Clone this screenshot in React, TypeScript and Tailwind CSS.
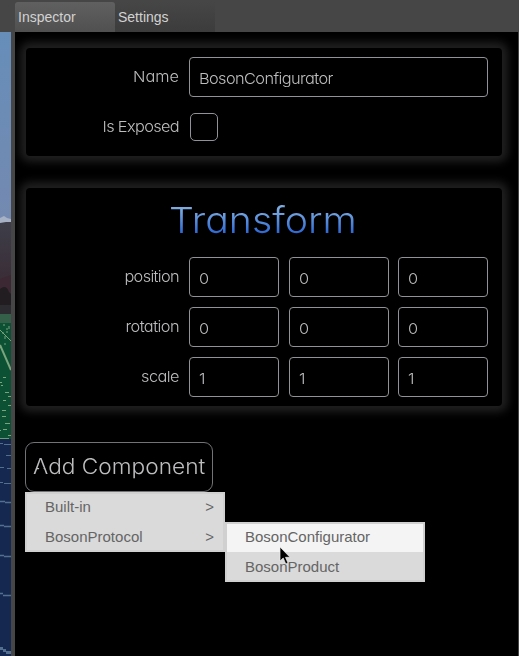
import type { ReactNode } from "react";

const thin =
  "font-[Inter,'Liberation_Sans',sans-serif] font-light text-[#bdbdbf] [font-feature-settings:'cv11','calt'_0]";

function SceneView() {
  return (
    <svg width="11" height="624" viewBox="0 0 11 624" className="block shrink-0" aria-hidden="true">
      <defs>
        <linearGradient id="sky" x1="0" y1="0" x2="0" y2="1">
          <stop offset="0" stopColor="#668eb9" />
          <stop offset="1" stopColor="#7489b0" />
        </linearGradient>
        <linearGradient id="hill" x1="0" y1="0" x2="0" y2="1">
          <stop offset="0" stopColor="#3d3e49" />
          <stop offset="1" stopColor="#3a2d36" />
        </linearGradient>
      </defs>
      <rect width="11" height="192" fill="url(#sky)" />
      <path d="M0 186 L4 184 L7 186 L11 187 V193 H0Z" fill="#a6b1c5" />
      <path d="M0 191 L6 190 L11 190 V250 H0Z" fill="url(#hill)" />
      <path d="M0 247 L11 243 V284 H0Z" fill="#3b2832" />
      <path d="M0 257 Q6 252 9 260 L11 262 V282 H0Z" fill="#211d20" />
      <rect y="273" width="11" height="10" fill="#2b2b30" />
      <rect y="282" width="11" height="9" fill="#345f49" />
      <rect y="291" width="11" height="116" fill="#0d5134" />
      <g stroke="#79a47e" fill="none">
        <path d="M0 298 L11 309" />
        <path d="M0 313 L11 338" strokeWidth="2" />
        <path d="M4 292v2M7 296v2M2 301h2M5 304v3M9 294v3M6 300h2M4 312h2" />
        <path d="M3 345.500h3M0 350.500h2M1 353.500h2M5 360.500h4M8 364.500h3M3 368.500h3M8 373.500h3M2 378.500h4M2 384.500h4M5 391.500h5M3 397.500h4M8 403.500h3M0 398.500h1" />
      </g>
      <rect y="407" width="11" height="217" fill="#152850" />
      <path d="M0 406.500h9" stroke="#6a9c72" />
      <g stroke="#536f8f" fill="none">
        <path d="M0 411.500h3M4 412.500h7M6 423.500h5M0 435.500h4M7 436.500h4M0 450.500h3M4 451.500h7" />
        <path d="M0 469.500h5M5 470.500h6M0 493.500h4M4 494.500h7M0 523.500h4M4 524.500h7M0 561.500h3M3 563.500h8" strokeWidth="1.500" />
        <path d="M0 616.500h3M3 618.500h3M6 620.500h5" strokeWidth="3" />
      </g>
    </svg>
  );
}

function Panel({ children, className }: { children: ReactNode; className: string }) {
  return (
    <section className={`ml-[11px] w-[476px] shrink-0 rounded-[4px] bg-black shadow-[0_0_8px_6px_#202020] ${className}`}>
      {children}
    </section>
  );
}

function Label({ children, className }: { children: ReactNode; className: string }) {
  return (
    <div className={`w-[153px] shrink-0 origin-right scale-x-[1.09] text-right text-[15px] leading-[40px] ${thin} ${className}`}>
      {children}
    </div>
  );
}

function Field({ value, className }: { value: string; className: string }) {
  return (
    <div className={`h-10 shrink-0 rounded-[4px] border border-[#919197] pl-[9px] text-[15px] leading-[41px] tracking-[-0.55px] ${thin} ${className}`}>
      <span className="inline-block origin-left scale-x-[1.09]">{value}</span>
    </div>
  );
}

function VectorRow({ label, spacing, value }: { label: string; spacing: string; value: string }) {
  return (
    <div className="flex h-10">
      <Label className={spacing}>{label}</Label>
      <div className="ml-[10px] flex">
        <Field value={value} className="w-[90px]" />
        <Field value={value} className="ml-[10px] w-[100px]" />
        <Field value={value} className="ml-[9px] w-[90px]" />
      </div>
    </div>
  );
}

function MenuItem({ children, arrow, className }: { children: ReactNode; arrow?: boolean; className: string }) {
  return (
    <div className={`flex justify-between pl-[18px] pr-[9px] text-[15px] text-[#656565] ${className}`}>
      <span>{children}</span>
      {arrow && <span>&gt;</span>}
    </div>
  );
}

export default function App() {
  return (
    <div className="flex h-[656px] w-[519px] flex-col overflow-hidden bg-[#464646] font-['Liberation_Sans',Arial,sans-serif]">
      <header className="flex h-8 shrink-0 pl-[15px] pt-[2px] text-[14px] leading-[31px] text-[#d2d2d2]">
        <div className="w-[100px] rounded-t-[3px] bg-gradient-to-b from-[#606060] to-[#505050] pl-[3px]">Inspector</div>
        <div className="w-[100px] bg-gradient-to-b from-[#464646] to-[#3c3c3c] pl-[3px]">Settings</div>
      </header>
      <div className="flex h-[624px]">
        <SceneView />
        <main className="ml-1 flex w-[503px] flex-col overflow-hidden bg-black">
          <Panel className="mt-4 h-[108px] pt-[9px]">
            <div className="flex h-10">
              <Label className="tracking-[0px]">Name</Label>
              <Field value="BosonConfigurator" className="ml-[10px] w-[299px]" />
            </div>
            <div className="mt-[10px] flex">
              <Label className="tracking-[-0.6px]">Is Exposed</Label>
              <div className="ml-[11px] mt-[6px] size-7 rounded-[5px] border border-[#919197]" />
            </div>
          </Panel>
          <Panel className="mt-8 h-[218px] pt-[10px]">
            <h1 className="h-[49px] pl-[143px] font-[Inter,sans-serif] text-[36px] font-light leading-[45px] [font-feature-settings:'cv11']">
              <span className="inline-block origin-left scale-x-[1.09] bg-gradient-to-b from-[#7dabe0] from-25% to-[#2b65d4] to-80% bg-clip-text text-transparent">
                Transform
              </span>
            </h1>
            <div className="mt-[10px] flex flex-col gap-[10px]">
              <VectorRow label="position" spacing="tracking-[-0.6px]" value="0" />
              <VectorRow label="rotation" spacing="tracking-[-0.5px]" value="0" />
              <VectorRow label="scale" spacing="tracking-[-0.5px]" value="1" />
            </div>
          </Panel>
          <div className="relative ml-[10px] mt-9">
            <button className={`relative block h-[50px] w-[188px] whitespace-nowrap rounded-[9px] border border-[#737377] pl-[7px] text-left text-[21px] leading-[46px] ${thin}`}>
              <span className="relative inline-block origin-left scale-x-[1.08]">
                Add Component
                <span className="absolute left-[2px] top-[22px] h-[7px] w-[11px] bg-black [clip-path:polygon(40%_0,64%_0,84%_100%,21%_100%)]" />
              </span>
            </button>
            <div className="h-[60px] w-[200px] border-2 border-[#d0d0d0] bg-[#dadada]">
              <MenuItem arrow className="h-[28px] leading-[25px]">Built-in</MenuItem>
              <MenuItem arrow className="h-[28px] leading-[29px]">BosonProtocol</MenuItem>
            </div>
            <div className="absolute left-[200px] top-[80px] h-[60px] w-[200px] border-2 border-[#d0d0d0] bg-[#dadada]">
              <MenuItem className="h-[28px] bg-[#f4f4f4] leading-[25px]">BosonConfigurator</MenuItem>
              <MenuItem className="h-[28px] leading-[29px]">BosonProduct</MenuItem>
            </div>
            <svg className="absolute left-[254px] top-[104px]" width="12" height="19" viewBox="0 0 12 19" aria-hidden="true">
              <path d="M1 1V15L4.200 12L6.800 18L9 17L6.500 11.300H11Z" fill="#000" stroke="#eee" strokeWidth="0.700" />
            </svg>
          </div>
        </main>
      </div>
    </div>
  );
}
